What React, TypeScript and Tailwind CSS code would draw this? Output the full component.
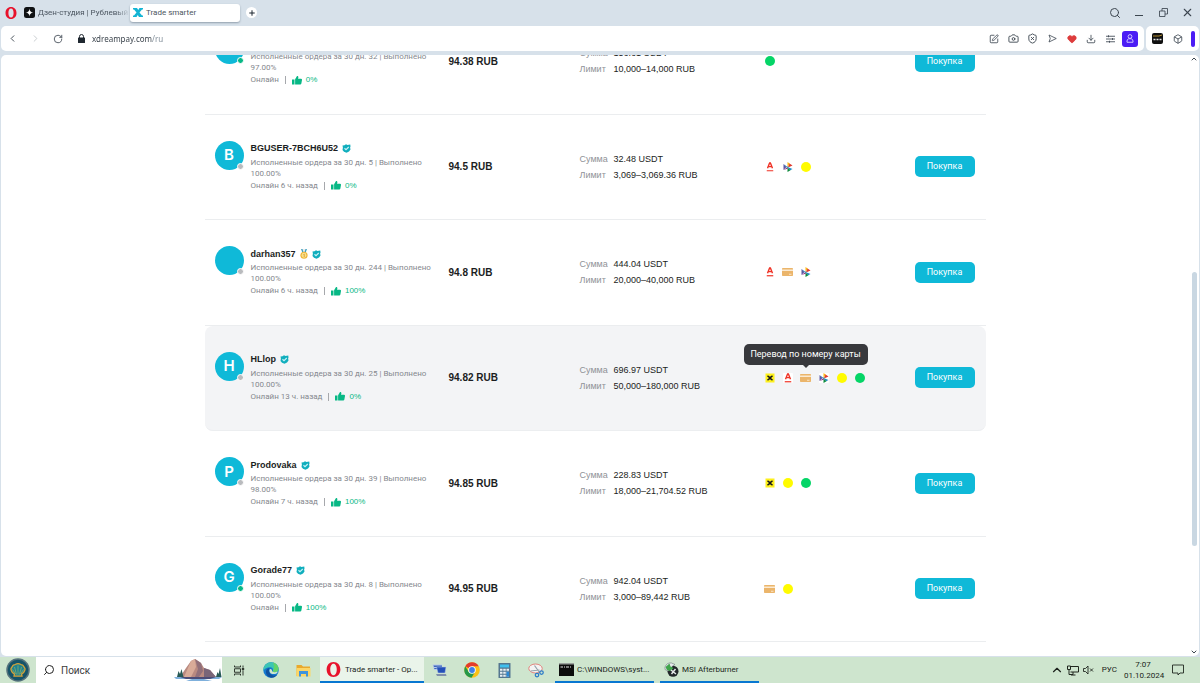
import React, { FC, ReactNode } from "react";
import {
  Box,
  Camera,
  ChevronDown,
  ChevronLeft,
  ChevronRight,
  ChevronUp,
  Copy,
  Download,
  Heart,
  Plus,
  RotateCw,
  Search,
  ShieldX,
  SquarePen,
  X,
} from "lucide-react";

type Method = "raif" | "alfa" | "card" | "sbp" | "yellow" | "green";

type Offer = {
  name: string;
  letter: string;
  online: boolean;
  seen: string;
  orders: number;
  completed: string;
  likes: string;
  medal?: boolean;
  price: string;
  amount: string;
  limit: string;
  methods: Method[];
  active?: boolean;
};

const offers: Offer[] = [
  {
    name: "Sanya",
    letter: "S",
    online: true,
    seen: "Онлайн",
    orders: 32,
    completed: "97.00%",
    likes: "0%",
    price: "94.38 RUB",
    amount: "156.61 USDT",
    limit: "10,000–14,000 RUB",
    methods: ["green"],
  },
  {
    name: "BGUSER-7BCH6U52",
    letter: "B",
    online: false,
    seen: "Онлайн 6 ч. назад",
    orders: 5,
    completed: "100.00%",
    likes: "0%",
    price: "94.5 RUB",
    amount: "32.48 USDT",
    limit: "3,069–3,069.36 RUB",
    methods: ["alfa", "sbp", "yellow"],
  },
  {
    name: "darhan357",
    letter: "",
    online: false,
    seen: "Онлайн 6 ч. назад",
    orders: 244,
    completed: "100.00%",
    likes: "100%",
    medal: true,
    price: "94.8 RUB",
    amount: "444.04 USDT",
    limit: "20,000–40,000 RUB",
    methods: ["alfa", "card", "sbp"],
  },
  {
    name: "HLlop",
    letter: "H",
    online: false,
    seen: "Онлайн 13 ч. назад",
    orders: 25,
    completed: "100.00%",
    likes: "0%",
    price: "94.82 RUB",
    amount: "696.97 USDT",
    limit: "50,000–180,000 RUB",
    methods: ["raif", "alfa", "card", "sbp", "yellow", "green"],
    active: true,
  },
  {
    name: "Prodovaka",
    letter: "P",
    online: false,
    seen: "Онлайн 7 ч. назад",
    orders: 39,
    completed: "98.00%",
    likes: "100%",
    price: "94.85 RUB",
    amount: "228.83 USDT",
    limit: "18,000–21,704.52 RUB",
    methods: ["raif", "yellow", "green"],
  },
  {
    name: "Gorade77",
    letter: "G",
    online: true,
    seen: "Онлайн",
    orders: 8,
    completed: "100.00%",
    likes: "100%",
    price: "94.95 RUB",
    amount: "942.04 USDT",
    limit: "3,000–89,442 RUB",
    methods: ["card", "yellow"],
  },
];

const OperaLogo: FC<{ className: string }> = ({ className }) => (
  <svg viewBox="0 0 24 24" className={className}>
    <path
      fill="#e8122b"
      fillRule="evenodd"
      d="M12 0C5.500 0 1 5 1 12s4.500 12 11 12 11-5 11-12S18.500 0 12 0zM12 2.800c3.400 0 5.200 4 5.200 9.200s-1.800 9.200-5.200 9.200S6.800 17.200 6.800 12 8.600 2.800 12 2.800z"
    />
  </svg>
);

const Verified: FC = () => (
  <svg viewBox="0 0 18 18" className="size-[9px]">
    <path
      fill="#10aebd"
      d="M1 3l4-.5L8 .5l3 1.500L16.500 1l.5 4-.8 2 .8 4-3 4-5 2.500-5-2L1 12l.8-5z"
    />
    <path d="M5 8.500l3 3 5.500-5.500" fill="none" stroke="#c9f3f8" strokeWidth="2.200" />
  </svg>
);

const Medal: FC = () => (
  <svg viewBox="0 0 16 20" className="h-[10px] w-2">
    <path d="M2 0h4l2 5 2-5h4l-3 8H5z" fill="#3f9fbd" />
    <path d="M5 0h6L9 6H7z" fill="#e9edf0" />
    <circle cx="8" cy="12.500" r="7.200" fill="#eeb63c" />
    <circle cx="8" cy="12.500" r="4.800" fill="#fbe08a" />
    <path d="M7 11l1.500-.8V16" fill="none" stroke="#c98a1c" strokeWidth="1.300" />
  </svg>
);

const ThumbUp: FC = () => (
  <svg viewBox="0 0 20 18" className="h-[9px] w-[10px]" fill="#07b885">
    <path d="M0 7h5v10H0z" />
    <path d="M6.200 6.500L10 0c2 0 3 1.200 2.700 3l-.6 2.700H18c1.400 0 2.200 1 2 2.300l-1.300 7.100c-.2 1.200-1 1.900-2.200 1.900H6.200z" />
  </svg>
);

const MethodIcon: FC<{ method: Method }> = ({ method }) => {
  switch (method) {
    case "raif":
      return (
        <svg viewBox="0 0 20 20" className="size-[10px]">
          <rect x="1" y="1" width="18" height="18" fill="#fdf01b" />
          <path d="M5 5.500l10 9M15 5.500l-10 9" stroke="#17171d" strokeWidth="3" />
          <path d="M8 10h4M10 7v6" stroke="#17171d" strokeWidth="3" />
        </svg>
      );
    case "alfa":
      return (
        <svg viewBox="0 0 20 20" className="size-[10px]">
          <rect width="20" height="20" rx="2" fill="#fff" />
          <path
            d="M5 12.500L9.200 2h1.600L15 12.500M7 9.300h6"
            fill="none"
            stroke="#ef3124"
            strokeWidth="2.800"
          />
          <path d="M3.500 17.500h13" stroke="#ef3124" strokeWidth="2.400" />
        </svg>
      );
    case "card":
      return (
        <svg viewBox="0 0 22 16" className="h-2 w-[11px]">
          <rect width="22" height="16" rx="1.500" fill="#ebb56b" />
          <path d="M0 4.500h22" stroke="#fbead2" strokeWidth="3" />
          <path d="M14 12.500h5" stroke="#fbead2" strokeWidth="1.800" />
        </svg>
      );
    case "sbp":
      return (
        <svg viewBox="0 0 20 20" className="size-[10px]">
          <rect width="20" height="20" rx="2" fill="#fff" />
          <path d="M1 4l6 6-6 6z" fill="#5b57a2" />
          <path d="M1 4l7 5h4L9 12z" fill="#1487c9" />
          <path d="M9 0l5 3.500-5 6.500z" fill="#fab718" />
          <path d="M13 3l6 4-9 4z" fill="#e03a2f" />
          <path d="M9 10l10 4-5 2.500z" fill="#1487c9" />
          <path d="M9 11l6 5.500L9 20z" fill="#108a3e" />
          <path d="M1 16l7-5 2 2z" fill="#8c2a80" />
        </svg>
      );
    case "yellow":
      return <span className="block size-[10px] rounded-full bg-[#fffb00]" />;
    default:
      return <span className="block size-[10px] rounded-full bg-[#05d567]" />;
  }
};

const OfferRow: FC<{ offer: Offer }> = ({ offer }) => (
  <tr
    className={
      offer.active
        ? "bg-[#f3f4f6] [&>td]:border-b [&>td]:border-[#eceef0]"
        : "[&>td]:border-b [&>td]:border-[#ebedef]"
    }
  >
    <td className={offer.active ? "rounded-l-lg px-[10px]" : "px-[10px]"}>
      <div className="flex gap-[7px]">
        <div className="relative flex size-[29px] shrink-0 items-center justify-center rounded-full bg-[#0fb9d8] font-[Inter,sans-serif] text-[15px] font-semibold text-white">
          {offer.letter}
          <span
            className={
              offer.online
                ? "absolute right-0 bottom-0 size-[7px] rounded-full border border-white bg-[#07b885]"
                : "absolute right-0 bottom-0 size-[7px] rounded-full border border-white bg-[#b9bbbe]"
            }
          />
        </div>
        <div className="whitespace-nowrap">
          <div className="flex h-4 items-center gap-1 text-[9px] font-bold text-[#1b1d22]">
            <span>{offer.name}</span>
            {offer.medal && <Medal />}
            <Verified />
          </div>
          <p className="font-[Roboto,sans-serif] text-[8px] leading-[11px] text-[#85888e]">
            Исполненные ордера за 30 дн. {offer.orders} | Выполнено
            <br />
            {offer.completed}
          </p>
          <div className="flex h-[14px] items-center gap-[6px] text-[8px] text-[#85888e]">
            <span className="font-[Roboto,sans-serif]">{offer.seen}</span>
            <span className="h-2 w-px bg-[#a6a8ac]" />
            <span className="flex items-center gap-1 text-[#07b885]">
              <ThumbUp />
              {offer.likes}
            </span>
          </div>
        </div>
      </div>
    </td>
    <td className="px-[10px] text-[10px] font-bold text-[#1b1d22]">
      {offer.price}
    </td>
    <td className="px-[10px] text-[9px] leading-4 text-[#1b1d22]">
      <div className="flex">
        <span className="w-[34px] text-[#8f9297]">Сумма</span>
        <span>{offer.amount}</span>
      </div>
      <div className="flex">
        <span className="w-[34px] text-[#8f9297]">Лимит</span>
        <span>{offer.limit}</span>
      </div>
    </td>
    <td className="px-[10px]">
      <ul className="flex items-center gap-2">
        {offer.methods.map((method) => (
          <li
            key={method}
            className="relative flex size-[10px] items-center justify-center"
          >
            <span className="shrink-0">
              <MethodIcon method={method} />
            </span>
            {offer.active && method === "card" && (
              <div
                role="tooltip"
                className="absolute bottom-[18px] left-1/2 flex h-[21px] w-[124px] -translate-x-1/2 items-center justify-center rounded-[5px] bg-[#38393d] font-[Roboto,sans-serif] text-[9px] whitespace-nowrap text-white"
              >
                Перевод по номеру карты
                <span className="absolute -bottom-[2px] left-1/2 size-[5px] -translate-x-1/2 rotate-45 bg-[#38393d]" />
              </div>
            )}
          </li>
        ))}
      </ul>
    </td>
    <td className={offer.active ? "rounded-r-lg px-[11px]" : "px-[11px]"}>
      <button
        type="button"
        className="ml-auto block h-[21px] w-[60px] rounded-[5px] bg-[#0fb9d8] font-[Roboto,sans-serif] text-[9px] text-white"
      >
        Покупка
      </button>
    </td>
  </tr>
);

const IconButton: FC<{ label: string; children: ReactNode }> = ({
  label,
  children,
}) => (
  <button
    type="button"
    aria-label={label}
    className="flex size-4 items-center justify-center"
  >
    {children}
  </button>
);

const TabBar: FC = () => (
  <div className="flex h-[26px] items-center pr-[5px] pb-px pl-[5px] font-[Roboto,sans-serif] text-[8px] text-[#4b5560]">
    <OperaLogo className="size-3" />
    <button type="button" className="ml-[7px] flex w-[106px] items-center gap-[3px]">
      <svg viewBox="0 0 22 22" className="size-[11px] shrink-0">
        <rect width="22" height="22" rx="5" fill="#101214" />
        <path d="M11 3q.5 7.500 8 8-7.500.5-8 8-.5-7.500-8-8 7.500-.5 8-8z" fill="#fff" />
      </svg>
      <span className="overflow-hidden [mask-image:linear-gradient(to_right,black_85%,transparent)] whitespace-nowrap">
        Дзен-студия | Рублевый в
      </span>
    </button>
    <button
      type="button"
      className="flex h-[18px] w-[110px] items-center gap-[3px] rounded-[3px] bg-white px-[3px] shadow-[0_1px_2px_rgba(40,60,80,0.4)]"
    >
      <svg viewBox="0 0 20 18" className="h-[9px] w-[10px]">
        <path d="M0 0h8l2.500 4L13 0h7v3h-2l-5 6 5 6h2v3h-8l-2.500-4L7 18H0v-3h2l5-6-5-6H0z" fill="#13b4d4" />
      </svg>
      Trade smarter
    </button>
    <button
      type="button"
      aria-label="Новая вкладка"
      className="ml-[6px] flex size-[11px] items-center justify-center rounded-full bg-white text-[#1d2630]"
    >
      <Plus size={8} strokeWidth={3} />
    </button>
    <div className="ml-auto flex gap-2 text-[#3c4650]">
      <IconButton label="Поиск вкладок">
        <Search size={12} strokeWidth={2} />
      </IconButton>
      <IconButton label="Свернуть">
        <span className="mt-[6px] h-px w-2 bg-[#3c4650]" />
      </IconButton>
      <IconButton label="Восстановить">
        <svg viewBox="0 0 18 18" className="size-[9px]" fill="none" stroke="currentColor" strokeWidth="1.700">
          <path d="M1 6h11v11H1zM6 6V1h11v11h-5" />
        </svg>
      </IconButton>
      <IconButton label="Закрыть">
        <X size={13} strokeWidth={2} />
      </IconButton>
    </div>
  </div>
);

const AddressBar: FC = () => (
  <div className="flex h-[25px] gap-[2px] px-px text-[#3c4650]">
    <div className="flex flex-1 items-center rounded-[5px] bg-white pr-[6px] pl-[3px]">
      <div className="flex gap-[7px]">
        <IconButton label="Назад">
          <ChevronLeft size={11} strokeWidth={2} />
        </IconButton>
        <span className="text-[#c5c9cd]">
          <IconButton label="Вперёд">
            <ChevronRight size={11} strokeWidth={2} />
          </IconButton>
        </span>
        <IconButton label="Обновить">
          <RotateCw size={10} strokeWidth={2} />
        </IconButton>
        <IconButton label="Сведения о сайте">
          <svg viewBox="0 0 14 18" className="h-[9px] w-[7px]">
            <rect y="7" width="14" height="11" rx="1" fill="#1f2830" />
            <path d="M3 8V5a4 4 0 0 1 8 0v3" fill="none" stroke="#1f2830" strokeWidth="2" />
          </svg>
        </IconButton>
      </div>
      <input
        type="text"
        aria-label="Адрес"
        defaultValue="xdreampay.com/ru"
        className="ml-[3px] w-40 flex-1 bg-linear-to-r from-[#333c45] from-[60px] to-[#7d8a96] to-[60px] bg-clip-text font-['Noto_Sans',sans-serif] text-[8px] leading-4 text-transparent caret-[#333c45] outline-none"
      />
      <div className="flex w-[152px] items-center justify-between">
        <IconButton label="Заметка">
          <SquarePen size={10} />
        </IconButton>
        <IconButton label="Снимок">
          <Camera size={11} />
        </IconButton>
        <IconButton label="Блокировка рекламы">
          <ShieldX size={11} />
        </IconButton>
        <IconButton label="Отправить">
          <svg viewBox="0 0 18 18" className="size-[9px]" fill="none" stroke="currentColor" strokeWidth="1.600" strokeLinejoin="round">
            <path d="M2 2l14.500 7L2 16l2.500-7z" />
          </svg>
        </IconButton>
        <IconButton label="Избранное">
          <Heart size={10} fill="#dd3c3c" stroke="#dd3c3c" />
        </IconButton>
        <IconButton label="Загрузки">
          <Download size={10} />
        </IconButton>
        <IconButton label="Настройки">
          <svg viewBox="0 0 18 16" className="h-2 w-[9px]" fill="none" stroke="currentColor" strokeWidth="1.700">
            <path d="M0 2.500h18M0 8h18M0 13.500h18M5 .5v4M13 6v4M7 11.500v4" />
          </svg>
        </IconButton>
        <button
          type="button"
          aria-label="Профиль"
          className="flex size-4 items-center justify-center rounded-[3px] bg-[#4b1cf5]"
        >
          <svg viewBox="0 0 16 18" className="h-[9px] w-2" fill="none" stroke="#dcd4ff" strokeWidth="1.800">
            <circle cx="8" cy="5" r="3.800" />
            <path d="M2 16.500V14a5 5 0 0 1 3.500-4.500h5A5 5 0 0 1 14 14v2.500z" />
          </svg>
        </button>
      </div>
    </div>
    <div className="flex items-center gap-[5px] rounded-[5px] bg-white pr-1 pl-[3px]">
      <IconButton label="Расширение">
        <svg viewBox="0 0 22 22" className="size-[11px]">
          <rect width="22" height="22" rx="4" fill="#101010" />
          <path d="M2 6h12l6-2" fill="none" stroke="#b08b2e" strokeWidth="2" />
          <path d="M3 13h4M9 13h4M15 13h4" stroke="#e8e8e8" strokeWidth="3" />
        </svg>
      </IconButton>
      <IconButton label="Расширения">
        <Box size={10} />
      </IconButton>
      <span className="h-4 w-1 rounded-full bg-[#4b1cf5]" />
    </div>
  </div>
);

const SearchPicture: FC = () => (
  <svg viewBox="0 0 48 24" className="h-6 w-12">
    <path d="M0 19h48l-3 2H30l8 2H12l6-2H2z" fill="#7fb0dc" />
    <path d="M6 19l6-9 5-7 4-2 6 4 3 5 6 2 6 7z" fill="#b98a80" />
    <path d="M17 3l4-2 1 8-5 10h-7z" fill="#d9ab98" />
    <path d="M21 1l6 4 2 8-4 6h-4l3-8z" fill="#92707a" />
    <path d="M30 10l6 2 6 7H30z" fill="#796578" />
    <path d="M3 19l1.500-6 1.500 3 1.500-5 2 8zM42 19l1.500-5 1 2 1.500-6 1.500 9z" fill="#285a56" />
    <path d="M6 19h36l-6 2H12z" fill="#4c4d78" />
  </svg>
);

const TaskApp: FC<{ title: string; active?: boolean; children: ReactNode }> = ({
  title,
  active,
  children,
}) => (
  <button
    type="button"
    className={
      active
        ? "flex h-full w-[104px] items-center gap-1 border-b-2 border-[#0877d1] bg-[#eaf4ea] px-[6px] pt-px"
        : "flex h-full w-[99px] items-center gap-[3px] border-b-2 border-[#0877d1] px-1 pt-px"
    }
  >
    {children}
    <span className="whitespace-nowrap">{title}</span>
  </button>
);

const Taskbar: FC = () => (
  <footer className="flex h-[26px] shrink-0 items-center bg-[#cee5ce] font-[Roboto,sans-serif] text-[8px] text-[#1a1f1a]">
    <button type="button" aria-label="Пуск" className="flex w-9 justify-center">
      <svg viewBox="0 0 48 48" className="size-6">
        <circle cx="24" cy="24" r="23.500" fill="#56727c" />
        <circle cx="24" cy="24" r="20.500" fill="#155369" />
        <path
          d="M24 11c-3 0-4 1-6 2-3 0-5 2-6 5-2 2-3 5-1 8 1 4 4 5 6 6l-1 4h16l-1-4c2-1 5-2 6-6 2-3 1-6-1-8-1-3-3-5-6-5-2-1-3-2-6-2z"
          fill="#1e8390"
          stroke="#d5a238"
          strokeWidth="2.500"
        />
        <path d="M24 33V15M21 33l-4-15M27 33l4-15M19 32l-6-9M29 32l6-9" stroke="#8fae6a" strokeWidth="1.500" />
      </svg>
    </button>
    <label className="flex h-full w-[186px] items-center bg-white pl-[7px]">
      <Search size={12} strokeWidth={2} className="-scale-x-100 text-[#222]" />
      <input
        type="text"
        aria-label="Поиск"
        placeholder="Поиск"
        className="ml-[6px] w-0 flex-1 text-[10px] outline-none placeholder:text-[#3c3c3c]"
      />
      <SearchPicture />
    </label>
    <div className="flex w-[98px] items-center justify-between pr-[9px] pl-[11px]">
      <button type="button" aria-label="Представление задач">
        <svg viewBox="0 0 24 22" className="h-[11px] w-3" fill="none" stroke="#20271f" strokeWidth="1.800">
          <path d="M3 1v3h12V1M3 21v-3h12v3M3 7.500h12v7H3zM20 1v4M20 11v10" />
          <path d="M18.500 6.500h3v3h-3z" fill="#20271f" />
        </svg>
      </button>
      <button type="button" aria-label="Edge">
        <svg viewBox="0 0 32 32" className="size-4">
          <circle cx="16" cy="16" r="15.500" fill="#1479cf" />
          <path d="M1 13C3 5 9 .5 16 .5c9 0 15 6.500 15 13 0 5-4 7-8 7-3 0-4-1-3-3 1-4-2-7-6-7C8 10.500 3 13 1 18z" fill="#3cc5b4" />
          <path d="M20 1c7 2 11 7 11 12.500 0 5-4 7-8 7-3 0-4-1-3-3 3-5 2-12 0-16.500z" fill="#62d36a" />
          <path d="M13 12c-2 5-1 11 5 14 4 2 8 1 11-1-3 4-7 6.500-12 6.500C10 31 5 25 6 18c1-4 4-6 7-6z" fill="#10529f" />
          <path d="M13 16c-1 5 4 9 9 8 3 0 5-1 7-3v-2c-6 3-11 1-11-2 0-3-4-5-5-1z" fill="#cee5ce" />
        </svg>
      </button>
      <button type="button" aria-label="Проводник">
        <svg viewBox="0 0 30 26" className="h-[13px] w-[15px]">
          <path d="M1 2h10l3 3h14v19H1z" fill="#e9a92c" />
          <path d="M1 8h28v17H1z" fill="#fcd667" />
          <path d="M6 14h18v11h-4v-5h-10v5H6z" fill="#3f94dc" />
        </svg>
      </button>
    </div>
    <TaskApp title="Trade smarter - Op..." active>
      <OperaLogo className="size-[15px] shrink-0" />
    </TaskApp>
    <div className="flex w-[131px] items-center justify-between pr-[11px] pl-[8px]">
      <button type="button" aria-label="Удалённый доступ">
        <svg viewBox="0 0 30 28" className="h-[14px] w-[15px]">
          <path d="M1 3h19v11H4z" fill="#b9cbe8" />
          <path d="M3 5h17v3H4zM4 10h17v2H5z" fill="#3d67bd" />
          <path d="M9 8h19l-2 12H12z" fill="#2450b8" stroke="#b9cbe8" />
          <path d="M8 22h20l1 4H10z" fill="#8090ad" />
        </svg>
      </button>
      <button type="button" aria-label="Chrome">
        <svg viewBox="0 0 32 32" className="size-4">
          <circle cx="16" cy="16" r="15.500" fill="#fbc116" />
          <path d="M16 16L2.600 8.300A15.500 15.500 0 0 1 29.400 8.300H16z" fill="#e33b2e" />
          <path d="M2.600 8.300A15.500 15.500 0 0 0 15 31.500l7-11.500L16 16l-6.500 4z" fill="#26984a" />
          <circle cx="16" cy="16" r="7.500" fill="#fff" />
          <circle cx="16" cy="16" r="5.800" fill="#3f7fe8" />
        </svg>
      </button>
      <button type="button" aria-label="Калькулятор">
        <svg viewBox="0 0 26 30" className="h-[15px] w-[13px]">
          <rect x="1" width="24" height="30" rx="1" fill="#54768f" />
          <rect x="4" y="3" width="18" height="6" fill="#3fc0ee" />
          <path d="M4 13.500h18M4 19.500h18M4 25.500h18" stroke="#e8eff3" strokeWidth="4" strokeDasharray="5 1.500" />
          <path d="M17 17.500h5v10h-5z" fill="#2d88d4" />
        </svg>
      </button>
      <button type="button" aria-label="Ножницы">
        <svg viewBox="0 0 32 30" className="h-[15px] w-4" fill="none">
          <ellipse cx="15" cy="11" rx="13.500" ry="9" fill="#f5f3f3" stroke="#e0837c" strokeWidth="2" />
          <path d="M5 16l18-2M13 5l10 14" stroke="#93a3ab" strokeWidth="2.500" />
          <circle cx="18" cy="24" r="3.500" stroke="#2b7cc8" strokeWidth="2.500" />
          <circle cx="27" cy="19" r="3.500" stroke="#2b7cc8" strokeWidth="2.500" />
        </svg>
      </button>
    </div>
    <TaskApp title="C:\WINDOWS\syst...">
      <svg viewBox="0 0 30 26" className="h-[13px] w-[15px] shrink-0">
        <rect width="30" height="26" fill="#0c0c0c" />
        <path d="M0 1.500h30" stroke="#9aa09c" strokeWidth="3" />
        <path d="M3 8h5M10 8h2M14 8h6M22 8h2" stroke="#e6e6e6" strokeWidth="2" />
      </svg>
    </TaskApp>
    <span className="w-[6px]" />
    <TaskApp title="MSI Afterburner">
      <svg viewBox="0 0 30 30" className="size-[15px] shrink-0">
        <circle cx="18" cy="18.500" r="11" fill="#22282a" />
        <path d="M2 10C4 4 9 1 15 2l7 3-6 4-2 5-6 4-6-3z" fill="#e4e9ea" stroke="#596468" />
        <path d="M3 10l8-7 2 6 6 3-6 6-7-2z" fill="#3ea54a" />
        <path d="M14 16l10 8M23 14l-8 10" stroke="#e5e8e9" strokeWidth="3" />
      </svg>
    </TaskApp>
    <div className="ml-auto flex items-center pr-4">
      <button type="button" aria-label="Скрытые значки">
        <ChevronUp size={14} />
      </button>
      <svg viewBox="0 0 24 22" className="ml-[3px] h-[11px] w-3" fill="none" stroke="#20271f" strokeWidth="2">
        <path d="M7 3h16v11H7M12 14v5M8 20h9M1 2h6v7H1zM4 9v10h8" />
      </svg>
      <svg viewBox="0 0 22 20" className="ml-1 h-[10px] w-[11px]" fill="none" stroke="#20271f" strokeWidth="1.800">
        <path d="M1 7h4l5-5v16l-5-5H1zM14 7l6 6M20 7l-6 6" />
      </svg>
      <span className="ml-2">РУС</span>
      <time className="ml-[7px] w-[38px] text-center leading-[11px]">
        7:07
        <br />
        01.10.2024
      </time>
      <button type="button" aria-label="Уведомления" className="ml-[10px]">
        <svg viewBox="0 0 24 24" className="size-3" fill="none" stroke="#20271f" strokeWidth="1.800">
          <path d="M1 2h22v16h-7l-4 4v-4H1z" />
        </svg>
      </button>
    </div>
  </footer>
);

export default function App() {
  return (
    <div className="flex h-screen flex-col overflow-hidden bg-[#d7e1ea]">
      <header className="shrink-0">
        <TabBar />
        <AddressBar />
      </header>
      <main className="mx-px mt-1 mb-px flex min-h-0 flex-1 overflow-hidden rounded-[5px] bg-white">
        <div className="flex-1 overflow-hidden font-['Liberation_Sans',sans-serif]">
          <table className="mx-auto -mt-[46px] h-[633px] w-full max-w-[781px] table-fixed border-separate border-spacing-0 text-left">
            <colgroup>
              <col className="w-[234px]" />
              <col className="w-[131px]" />
              <col className="w-[185px]" />
              <col />
              <col className="w-[82px]" />
            </colgroup>
            <tbody>
              {offers.map((offer) => (
                <OfferRow key={offer.name} offer={offer} />
              ))}
            </tbody>
          </table>
        </div>
        <div className="flex w-[10px] shrink-0 flex-col items-center justify-between text-[#3c4650]">
          <ChevronUp size={8} strokeWidth={3} />
          <span className="mt-[209px] mb-auto h-[274px] w-[5px] rounded-full bg-[#c9d7e2]" />
          <ChevronDown size={8} strokeWidth={3} />
        </div>
      </main>
      <Taskbar />
    </div>
  );
}
